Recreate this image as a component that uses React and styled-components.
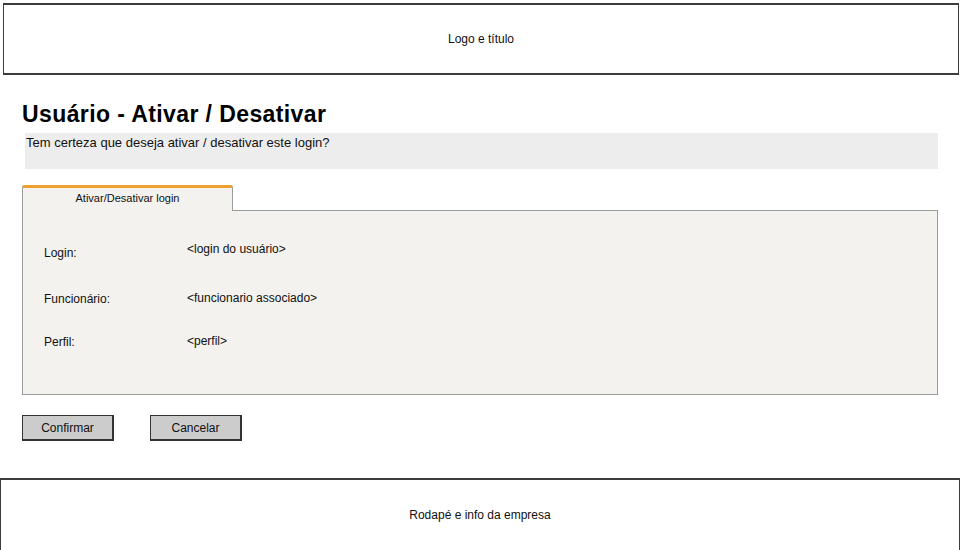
import React from 'react'
import styled, { createGlobalStyle } from 'styled-components'

const Global = createGlobalStyle`
body{
margin:0;
background:#ffffff;
font-family:"Liberation Sans", Arial, sans-serif;
color:#111;
}
`

const Page = styled('div')`
width:960px;
height:550px;
overflow:hidden;
display:flex;
flex-flow:column nowrap;
& > *{
flex-shrink:0;
}
`
const Header = styled('div')`
margin:3px 1px 0 3px;
height:72px;
box-sizing:border-box;
border:1px solid #3c3c3c;
border-top-width:2px;
border-bottom-width:2px;
display:flex;
align-items:center;
justify-content:center;
font-size:12px;
`
const Main = styled('div')`
padding:0 22px;
display:flex;
flex-flow:column nowrap;
`
const Title = styled('h1')`
margin:26px 0 0 0;
font-size:23px;
letter-spacing:0.4px;
line-height:26px;
font-weight:bold;
color:#000;
`
const Notice = styled('div')`
margin:6px 0 0 3px;
height:36px;
background:#ededed;
font-size:13px;
line-height:15px;
padding:2px 0 0 1px;
box-sizing:border-box;
`
const TabStrip = styled('div')`
margin-top:16px;
display:flex;
flex-flow:row nowrap;
`
const Tab = styled('div')`
width:211px;
height:26px;
box-sizing:border-box;
background:#f3f2ee;
border:1px solid #9a9e9a;
border-top:3px solid #f0a030;
border-bottom:none;
border-radius:2px 2px 0 0;
font-size:11px;
text-align:center;
line-height:21px;
`
const TabFill = styled('div')`
flex:1;
border-bottom:1px solid #9a9e9a;
`
const Panel = styled('div')`
height:184px;
box-sizing:border-box;
background:#f3f2ee;
border:1px solid #9a9e9a;
border-top:none;
padding:31px 0 0 21px;
display:flex;
flex-flow:column nowrap;
`
const Row = styled('div')`
display:flex;
flex-flow:row nowrap;
margin-top:${p => p.$mt || 0}px;
font-size:12px;
line-height:14px;
`
const Label = styled('div')`
width:143px;
padding-top:${p => p.$drop || 0}px;
`
const Value = styled('div')``

const Buttons = styled('div')`
margin-top:20px;
display:flex;
gap:36px;
`
const Button = styled('button')`
width:92px;
height:26px;
box-sizing:border-box;
background:#cccccc;
border:1px solid #333;
border-width:1px 2px 2px 1px;
font-family:"Liberation Sans", Arial, sans-serif;
font-size:12px;
color:#111;
padding:0;
`
const Footer = styled('div')`
margin-top:37px;
height:80px;
box-sizing:border-box;
border:1px solid #3c3c3c;
border-top-width:2px;
border-bottom:none;
display:flex;
justify-content:center;
padding-top:28px;
font-size:12px;
`

const rows = [
  { label: 'Login:', value: '<login do usuário>', mt: 0, drop: 4 },
  { label: 'Funcionário:', value: '<funcionario associado>', mt: 31, drop: 1 },
  { label: 'Perfil:', value: '<perfil>', mt: 28, drop: 1 },
]

function App() {
  return (
    <Page>
      <Global />
      <Header>Logo e título</Header>
      <Main>
        <Title>Usuário - Ativar / Desativar</Title>
        <Notice>Tem certeza que deseja ativar / desativar este login?</Notice>
        <TabStrip>
          <Tab>Ativar/Desativar login</Tab>
          <TabFill />
        </TabStrip>
        <Panel>
          {rows.map(r => (
            <Row key={r.label} $mt={r.mt}>
              <Label $drop={r.drop}>{r.label}</Label>
              <Value>{r.value}</Value>
            </Row>
          ))}
        </Panel>
        <Buttons>
          <Button>Confirmar</Button>
          <Button>Cancelar</Button>
        </Buttons>
      </Main>
      <Footer>Rodapé e info da empresa</Footer>
    </Page>
  )
}

export default App
